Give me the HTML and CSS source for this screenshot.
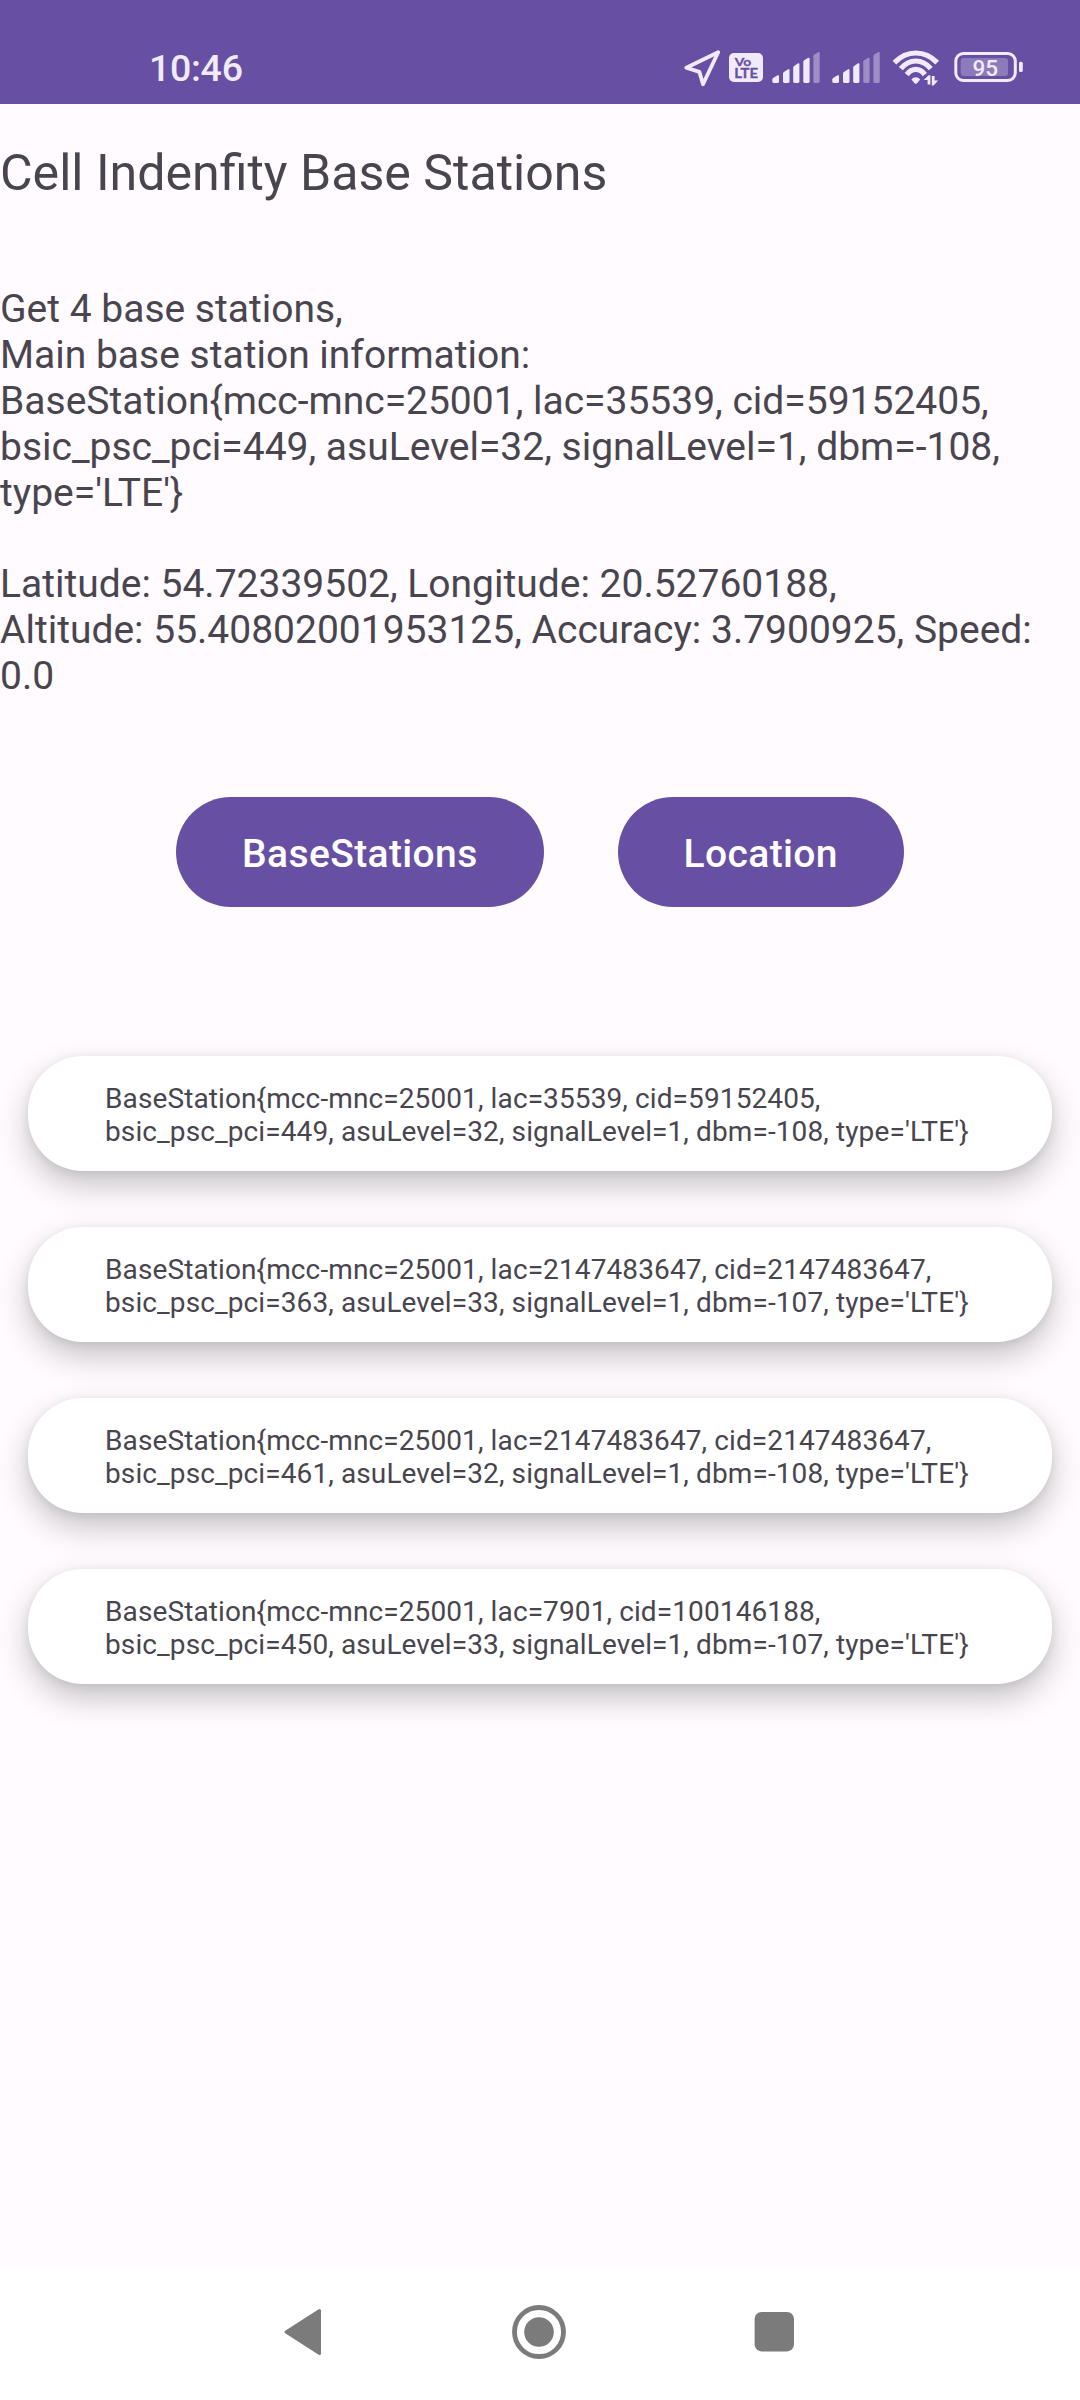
FILE: index.html
```html
<!DOCTYPE html>
<html lang="en">
<head>
<meta charset="utf-8">
<title>Cell Indenfity Base Stations</title>
<link rel="stylesheet" href="styles.css">
</head>
<body>
<div class="screen">
  <header class="status-bar">
    <span class="clock">10:46</span>
    <div class="status-icons">
      <svg class="icon-gps" viewBox="683 48 40 40" width="40" height="40"><path d="M718.2 52.2 686.3 67.8 699.4 71.9 703 84.2Z" fill="none" stroke="#f0eafa" stroke-width="3.8" stroke-linejoin="round"/></svg>
      <svg class="icon-volte" viewBox="729 48 34 40" width="34" height="40">
        <rect x="729" y="53" width="34" height="29" rx="5" fill="#f0eafa"/>
        <text class="volte-text" x="734.8" y="66" font-size="12" textLength="16.5" lengthAdjust="spacingAndGlyphs">Vo</text>
        <text class="volte-text" x="734.2" y="78.4" font-size="13" textLength="24" lengthAdjust="spacingAndGlyphs">LTE</text>
      </svg>
      <svg class="icon-signal" viewBox="772 48 48 40" width="48" height="40" fill="#f0eafa">
        <path d="M772.3 79.6 Q772.3 78.6 773.2 78 L777.5 75.3 Q779 74.8 779 76.2 V81.6 Q779 83 777.6 83 H773.7 Q772.3 83 772.3 81.6Z"/>
        <path d="M783 73.5 Q783 72.5 783.9 71.9 L788.2 69.2 Q789.5 68.7 789.5 70.1 V81.6 Q789.5 83 788.1 83 H784.4 Q783 83 783 81.6Z"/>
        <path d="M793.2 67.5 Q793.2 66.5 794.1 65.9 L798.1 63.3 Q799.4 62.8 799.4 64.2 V81.6 Q799.4 83 798 83 H794.6 Q793.2 83 793.2 81.6Z"/>
        <path d="M803.3 61.8 Q803.3 60.8 804.2 60.2 L808.3 57.8 Q809.6 57.3 809.6 58.7 V81.6 Q809.6 83 808.2 83 H804.7 Q803.3 83 803.3 81.6Z"/>
        <path opacity=".4" d="M813.4 56.2 Q813.4 55.2 814.3 54.6 L818.4 52.1 Q819.7 51.6 819.7 53 V81.6 Q819.7 83 818.3 83 H814.8 Q813.4 83 813.4 81.6Z"/>
      </svg>
      <svg class="icon-signal" viewBox="772 48 48 40" width="48" height="40" fill="#f0eafa">
        <path d="M772.3 79.6 Q772.3 78.6 773.2 78 L777.5 75.3 Q779 74.8 779 76.2 V81.6 Q779 83 777.6 83 H773.7 Q772.3 83 772.3 81.6Z"/>
        <path d="M783 73.5 Q783 72.5 783.9 71.9 L788.2 69.2 Q789.5 68.7 789.5 70.1 V81.6 Q789.5 83 788.1 83 H784.4 Q783 83 783 81.6Z"/>
        <path d="M793.2 67.5 Q793.2 66.5 794.1 65.9 L798.1 63.3 Q799.4 62.8 799.4 64.2 V81.6 Q799.4 83 798 83 H794.6 Q793.2 83 793.2 81.6Z"/>
        <path opacity=".4" d="M803.3 61.8 Q803.3 60.8 804.2 60.2 L808.3 57.8 Q809.6 57.3 809.6 58.7 V81.6 Q809.6 83 808.2 83 H804.7 Q803.3 83 803.3 81.6Z"/>
        <path opacity=".4" d="M813.4 56.2 Q813.4 55.2 814.3 54.6 L818.4 52.1 Q819.7 51.6 819.7 53 V81.6 Q819.7 83 818.3 83 H814.8 Q813.4 83 813.4 81.6Z"/>
      </svg>
      <svg class="icon-wifi" viewBox="892 48 48 40" width="48" height="40">
        <g fill="none" stroke="#f0eafa" stroke-width="5.2">
          <path d="M894.4 62.6Q903.7 53 915.8 53T937.2 62.6"/>
          <path d="M900.8 68.6Q907.2 61 915.8 61T930.8 68.6"/>
          <path d="M906.8 74.6Q910.6 69.4 915.8 69.4T924.8 74.6"/>
        </g>
        <path fill="#f0eafa" d="M911.4 79.5Q913 77.2 915.8 77.2T920.2 79.5L917 83.2Q915.8 84.4 914.6 83.2Z"/>
        <path fill="#f0eafa" d="M923.8 80 928.6 75.2H930.4V84.6H927.6V80ZM938.2 80.6 933.6 85.4H931.8V76H934.6V80.6Z"/>
      </svg>
      <svg class="icon-battery" viewBox="954 48 69 40" width="69" height="40">
        <rect x="955.8" y="53.5" width="59.5" height="27" rx="7.5" fill="none" stroke="#f0eafa" stroke-width="3"/>
        <rect x="960.7" y="58" width="47.3" height="18" rx="3" fill="#f0eafa" opacity=".28"/>
        <rect x="1019" y="61.7" width="3.8" height="10.4" rx="1.6" fill="#f0eafa"/>
        <text class="battery-text" x="985.2" y="75.8" text-anchor="middle">95</text>
      </svg>
    </div>
  </header>

  <main class="content">
    <h1 class="title">Cell Indenfity Base Stations</h1>
    <p class="info">Get 4 base stations,<br>Main base station information:<br>BaseStation{mcc-mnc=25001, lac=35539, cid=59152405,<br>bsic_psc_pci=449, asuLevel=32, signalLevel=1, dbm=-108,<br>type='LTE'}</p>
    <p class="info location">Latitude: 54.72339502, Longitude: 20.52760188,<br>Altitude: 55.40802001953125, Accuracy: 3.7900925, Speed:<br>0.0</p>
    <div class="actions">
      <button class="button">BaseStations</button>
      <button class="button">Location</button>
    </div>
    <ul class="stations">
      <li class="station">BaseStation{mcc-mnc=25001, lac=35539, cid=59152405,<br>bsic_psc_pci=449, asuLevel=32, signalLevel=1, dbm=-108, type='LTE'}</li>
      <li class="station">BaseStation{mcc-mnc=25001, lac=2147483647, cid=2147483647,<br>bsic_psc_pci=363, asuLevel=33, signalLevel=1, dbm=-107, type='LTE'}</li>
      <li class="station">BaseStation{mcc-mnc=25001, lac=2147483647, cid=2147483647,<br>bsic_psc_pci=461, asuLevel=32, signalLevel=1, dbm=-108, type='LTE'}</li>
      <li class="station">BaseStation{mcc-mnc=25001, lac=7901, cid=100146188,<br>bsic_psc_pci=450, asuLevel=33, signalLevel=1, dbm=-107, type='LTE'}</li>
    </ul>
  </main>

  <nav class="nav-bar">
    <svg viewBox="284 2302 38 60" width="38" height="60"><path d="M286 2332 319.5 2310.6V2353.4Z" fill="#7b7b7b" stroke="#7b7b7b" stroke-width="3" stroke-linejoin="round"/></svg>
    <svg viewBox="510 2302 56 60" width="56" height="60"><circle cx="539" cy="2332" r="24.5" fill="none" stroke="#7b7b7b" stroke-width="4.8"/><circle cx="539" cy="2332" r="14.8" fill="#7b7b7b"/></svg>
    <svg viewBox="754 2302 40 60" width="40" height="60"><rect x="754.6" y="2312" width="39.4" height="39.4" rx="7" fill="#7b7b7b"/></svg>
  </nav>
</div>
</body>
</html>
```
FILE: styles.css
```css
* {
  box-sizing: border-box;
}

body {
  margin: 0;
  font-family: Roboto, "Liberation Sans", sans-serif;
  color: #49454f;
  background: #fffbff;
}

.screen {
  display: flex;
  flex-direction: column;
  width: 1080px;
  height: 2400px;
}

.status-bar {
  display: flex;
  justify-content: space-between;
  height: 104px;
  padding: 48px 57px 0 149px;
  background: #6750a3;
  color: #f0eafa;
}

.clock {
  font-size: 37.5px;
  font-weight: 500;
  line-height: 40px;
  letter-spacing: -0.3px;
}

.status-icons {
  display: flex;
}

.icon-volte {
  margin-left: 6px;
}

.icon-signal {
  margin-left: 9px;
}

.icon-signal + .icon-signal,
.icon-wifi {
  margin-left: 12px;
}

.icon-battery {
  margin-left: 14px;
}

.volte-text {
  font-family: Lato, sans-serif;
  font-weight: 700;
  fill: #6750a3;
  stroke: #6750a3;
  stroke-width: 0.3px;
}

.battery-text {
  font-size: 22.5px;
  font-weight: 500;
  fill: #f0eafa;
}

.content {
  flex: 1;
}

.title {
  margin: 0;
  padding-top: 39px;
  font-size: 50.1px;
  font-weight: 400;
  line-height: 60px;
  white-space: nowrap;
}

.info {
  margin: 83px 0 0;
  font-size: 39px;
  line-height: 46px;
  white-space: nowrap;
}

.location {
  margin-top: 45px;
}

.actions {
  display: flex;
  justify-content: center;
  gap: 74px;
  margin-top: 98px;
}

.button {
  height: 110px;
  padding: 3px 66px 0;
  border: 0;
  border-radius: 55px;
  background: #6750a3;
  color: #fff;
  font: 500 39px/46px Roboto, "Liberation Sans", sans-serif;
  letter-spacing: 0.0095em;
}

.stations {
  display: flex;
  flex-direction: column;
  gap: 56px;
  margin: 149px 28px 0;
  padding: 0;
  list-style: none;
}

.station {
  height: 115px;
  padding: 26px 77px 0;
  border-radius: 55px;
  background: #fff;
  box-shadow: 0 14px 32px rgba(0, 0, 0, 0.23), 0 2px 10px rgba(0, 0, 0, 0.07);
  font-size: 28px;
  line-height: 33px;
  letter-spacing: 0.11px;
  white-space: nowrap;
}

.nav-bar {
  display: flex;
  height: 131px;
  padding: 33px 286px 0 284px;
  justify-content: space-between;
  background: #fff;
}
```
